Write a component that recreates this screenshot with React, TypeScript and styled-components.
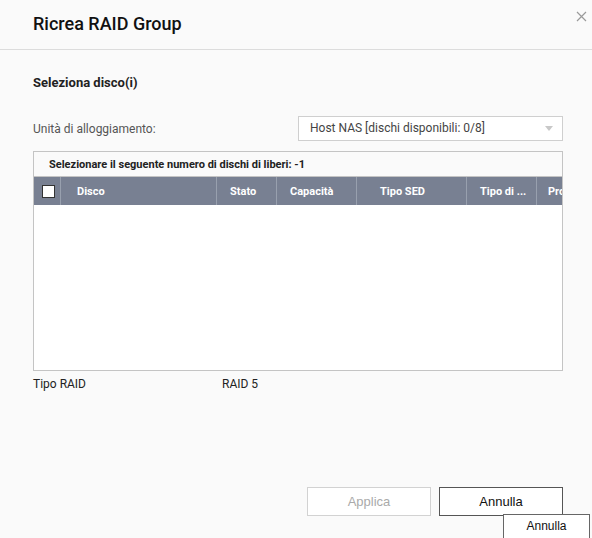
import styled, { createGlobalStyle } from 'styled-components';

const GlobalStyle = createGlobalStyle`
   html, body {
      margin: 0;
      padding: 0;
      background: #fafafa;
   }
   body {
      font-family: Roboto, "Liberation Sans", Arial, sans-serif;
      color: #222;
   }
`;

const Dialog = styled.div`
   position: relative;
   width: 592px;
   height: 538px;
   overflow: hidden;
   display: flex;
   flex-direction: column;
   background: #fafafa;
`;

const Header = styled.div`
   height: 50px;
   box-sizing: border-box;
   border-bottom: 1px solid #dcdcdc;
   display: flex;
   align-items: center;
   padding: 0 0 2px 33px;
`;

const Title = styled.h1`
   margin: 0;
   font-size: 18px;
   font-weight: 500;
   color: #111;
`;

const CloseButton = styled.button`
   position: absolute;
   top: 9px;
   right: 4px;
   width: 14px;
   height: 14px;
   padding: 0;
   border: none;
   background: transparent;
   display: flex;
   align-items: center;
   justify-content: center;
`;

const Body = styled.div`
   flex: 1;
   display: flex;
   flex-direction: column;
   padding: 25px 29px 0 33px;
`;

const SectionTitle = styled.h2`
   margin: 0;
   font-size: 13px;
   line-height: 16px;
   font-weight: 700;
   color: #222;
`;

const FieldRow = styled.div`
   margin-top: 25px;
   display: flex;
   align-items: center;
   justify-content: space-between;
`;

const Label = styled.span`
   font-size: 12px;
   color: #555;
`;

const Select = styled.div`
   width: 265px;
   height: 25px;
   box-sizing: border-box;
   border: 1px solid #cfcfcf;
   background: #fff;
   display: flex;
   align-items: center;
   justify-content: space-between;
   padding: 0 9px 1px 11px;
   font-size: 12px;
   color: #444;
`;

const Caret = styled.span`
   width: 0;
   height: 0;
   border-left: 4px solid transparent;
   border-right: 4px solid transparent;
   border-top: 5px solid #c8c8c8;
`;

const Table = styled.div`
   margin-top: 10px;
   height: 220px;
   box-sizing: border-box;
   border: 1px solid #c4c4c4;
   background: #fff;
   overflow: hidden;
   display: flex;
   flex-direction: column;
`;

const Caption = styled.div`
   height: 25px;
   flex: none;
   box-sizing: border-box;
   border-bottom: 1px solid #c4c4c4;
   background: #fafafa;
   display: flex;
   align-items: center;
   padding-left: 15px;
   font-size: 11px;
   font-weight: 700;
   color: #222;
`;

const HeadRow = styled.div`
   height: 28px;
   flex: none;
   display: flex;
   background: #788092;
`;

const HeadCell = styled.div<{ $w: number; $pad?: number }>`
   flex: none;
   width: ${(p) => p.$w}px;
   box-sizing: border-box;
   padding-left: ${(p) => p.$pad ?? 13}px;
   border-right: 1px solid #98a0ae;
   display: flex;
   align-items: center;
   white-space: nowrap;
   overflow: hidden;
   font-size: 11px;
   font-weight: 700;
   color: #fff;
`;

const CheckBox = styled.span`
   width: 11px;
   height: 11px;
   background: #fff;
   border: 1px solid #333;
`;

const InfoRow = styled.div`
   margin-top: 6px;
   display: flex;
   font-size: 12px;
   color: #222;
`;

const InfoLabel = styled.span`
   width: 189px;
`;

const Footer = styled.div`
   display: flex;
   justify-content: flex-end;
   gap: 8px;
   padding: 0 29px 22px 0;
`;

const Button = styled.button<{ $disabled?: boolean }>`
   width: 124px;
   height: 29px;
   box-sizing: border-box;
   background: #fff;
   border: 1px solid ${(p) => (p.$disabled ? '#d2d2d2' : '#555')};
   color: ${(p) => (p.$disabled ? '#aaa' : '#111')};
   font-family: "Liberation Sans", Arial, sans-serif;
   font-size: 13px;
   padding: 0;
`;

const Tooltip = styled.div`
   position: absolute;
   left: 503px;
   top: 514px;
   width: 87px;
   height: 27px;
   box-sizing: border-box;
   background: #fff;
   border: 1px solid #666;
   padding-top: 4px;
   text-align: center;
   font-family: "Liberation Sans", Arial, sans-serif;
   font-size: 12px;
   color: #111;
`;

const columns = [
   { label: 'Disco', w: 156, pad: 16 },
   { label: 'Stato', w: 60 },
   { label: 'Capacità', w: 80 },
   { label: 'Tipo SED', w: 110, pad: 23 },
   { label: 'Tipo di ...', w: 70 },
   { label: 'Produttore', w: 100, pad: 11 },
];

export default function App() {
   return (
      <>
         <GlobalStyle />
         <Dialog>
            <Header>
               <Title>Ricrea RAID Group</Title>
            </Header>
            <CloseButton aria-label="Chiudi">
               <svg width="11" height="11" viewBox="0 0 11 11">
                  <path d="M1 1 L10 10 M10 1 L1 10" stroke="#9a9a9a" strokeWidth="1.2" />
               </svg>
            </CloseButton>
            <Body>
               <SectionTitle>Seleziona disco(i)</SectionTitle>
               <FieldRow>
                  <Label>Unità di alloggiamento:</Label>
                  <Select>
                     <span>Host NAS [dischi disponibili: 0/8]</span>
                     <Caret />
                  </Select>
               </FieldRow>
               <Table>
                  <Caption>Selezionare il seguente numero di dischi di liberi: -1</Caption>
                  <HeadRow>
                     <HeadCell $w={27} $pad={8}>
                        <CheckBox />
                     </HeadCell>
                     {columns.map((c) => (
                        <HeadCell key={c.label} $w={c.w} $pad={c.pad}>
                           {c.label}
                        </HeadCell>
                     ))}
                  </HeadRow>
               </Table>
               <InfoRow>
                  <InfoLabel>Tipo RAID</InfoLabel>
                  <span>RAID 5</span>
               </InfoRow>
            </Body>
            <Footer>
               <Button $disabled disabled>
                  Applica
               </Button>
               <Button>Annulla</Button>
            </Footer>
            <Tooltip>Annulla</Tooltip>
         </Dialog>
      </>
   );
}
